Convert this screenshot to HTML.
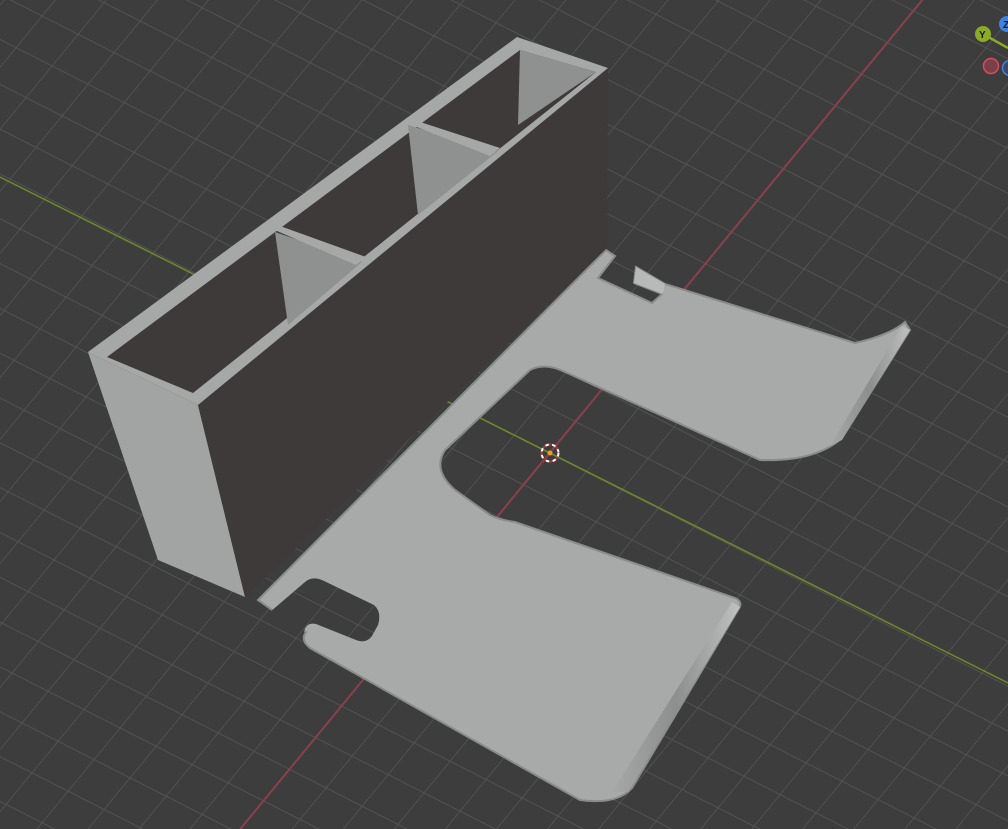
<!DOCTYPE html>
<html><head><meta charset="utf-8"><style>html,body{margin:0;padding:0;background:#3d3d3d;overflow:hidden}svg{display:block}</style></head>
<body>
<svg width="1008" height="829" viewBox="0 0 1008 829" xmlns="http://www.w3.org/2000/svg">
<defs>
<pattern id="g" patternUnits="userSpaceOnUse" width="100" height="100" patternTransform="matrix(0.36 0.183 -0.26 0.316 550 453)">
<rect width="100" height="100" fill="#3d3d3d"/>
<path d="M0 0H100M0 0V100" stroke="#555555" stroke-width="4" fill="none"/>
</pattern>
<linearGradient id="c1" x1="0" y1="0" x2="1" y2="0">
<stop offset="0" stop-color="#a6a8a8"/><stop offset="0.5" stop-color="#8d8f8f"/><stop offset="1" stop-color="#c0c2c2"/>
</linearGradient>
</defs>
<rect width="1008" height="829" fill="url(#g)"/>
<line x1="0" y1="177" x2="1008" y2="683" stroke="#6c8a2a" stroke-width="1.5"/>
<line x1="240" y1="829" x2="922" y2="0" stroke="#9a3a48" stroke-width="1.5"/>

<!-- base plate -->
<path d="M258,600 L606,250 L615,256 L598,278 L652,303 L662,294 L634,283 L636,267 L665,284 L855,343 Q890,335 905,322 L910,330 L842,438 Q815,462 760,460 L565,372 Q545,362 530,370 L445,450 Q432,470 455,490 L490,515 Q500,520 515,522 L735,598 Q744,602 738,610 L632,788 Q617,805 580,800 L310,648 Q300,640 306,632 L275,612 Z" fill="#a8aaaa" stroke="#8a8c8c" stroke-width="2"/>
<path d="M634,283 L636,267 L665,284 L663,294 Z" fill="#b8baba"/>
<path d="M830,446 L902,326 L910,330 L842,440 Z" fill="url(#c1)"/>
<path d="M612,792 L732,602 L740,607 L628,792 Z" fill="url(#c1)"/>
<!-- slot -->
<path d="M270,612 L305,582 Q312,576 322,580 L374,605 Q382,612 378,625 L372,636 Q366,644 356,640 L316,624 Q306,622 304,632 L300,645 Z" fill="url(#g)"/>

<!-- box -->
<path d="M88,352 L198,405 L245,597 L158,560 Z" fill="#a2a4a4"/>
<path d="M198,405 L608,68 L607,248 L245,597 Z" fill="#3f3a3a"/>
<path d="M88,352 L517,37 L608,68 L198,405 Z" fill="#a6a8a8"/>
<path d="M107,357 L520,50 L596,72 L193,393 Z" fill="#3f3a3a"/>
<path d="M520,50 L596,72 L518,125 Z" fill="#8f9191"/>
<path d="M408,125 L497,152 L418,215 Z" fill="#8f9191"/>
<path d="M275,232 L362,262 L288,325 Z" fill="#8f9191"/>
<path d="M404,122 L414,120 L500,148 L490,156 Z" fill="#a6a8a8"/>
<path d="M270,228 L280,226 L366,257 L356,265 Z" fill="#a6a8a8"/>

<!-- origin marker -->
<circle cx="550" cy="453" r="8.5" fill="none" stroke="#fff" stroke-width="2" stroke-dasharray="4 3"/>
<circle cx="550" cy="453" r="8.5" fill="none" stroke="#c03030" stroke-width="2" stroke-dasharray="3 4" stroke-dashoffset="3.5"/>
<circle cx="550" cy="453" r="2.5" fill="#f0a020"/>

<!-- gizmo -->
<line x1="983" y1="34" x2="1008" y2="48" stroke="#8aab28" stroke-width="2.5"/>
<circle cx="1007" cy="24" r="8" fill="#3f82e0"/>
<text x="1003" y="28" font-family="Liberation Sans, sans-serif" font-size="10" font-weight="bold" fill="#1a1a1a">Z</text>
<circle cx="983" cy="34" r="8" fill="#8aab28"/>
<text x="979" y="38" font-family="Liberation Sans, sans-serif" font-size="10" font-weight="bold" fill="#1a1a1a">Y</text>
<circle cx="991" cy="66" r="7.5" fill="#7a4048" stroke="#d84a5c" stroke-width="1.5"/>
<circle cx="1010" cy="68" r="7.5" fill="#3a4a66" stroke="#4a80d0" stroke-width="1.5"/>
</svg>
</body></html>
